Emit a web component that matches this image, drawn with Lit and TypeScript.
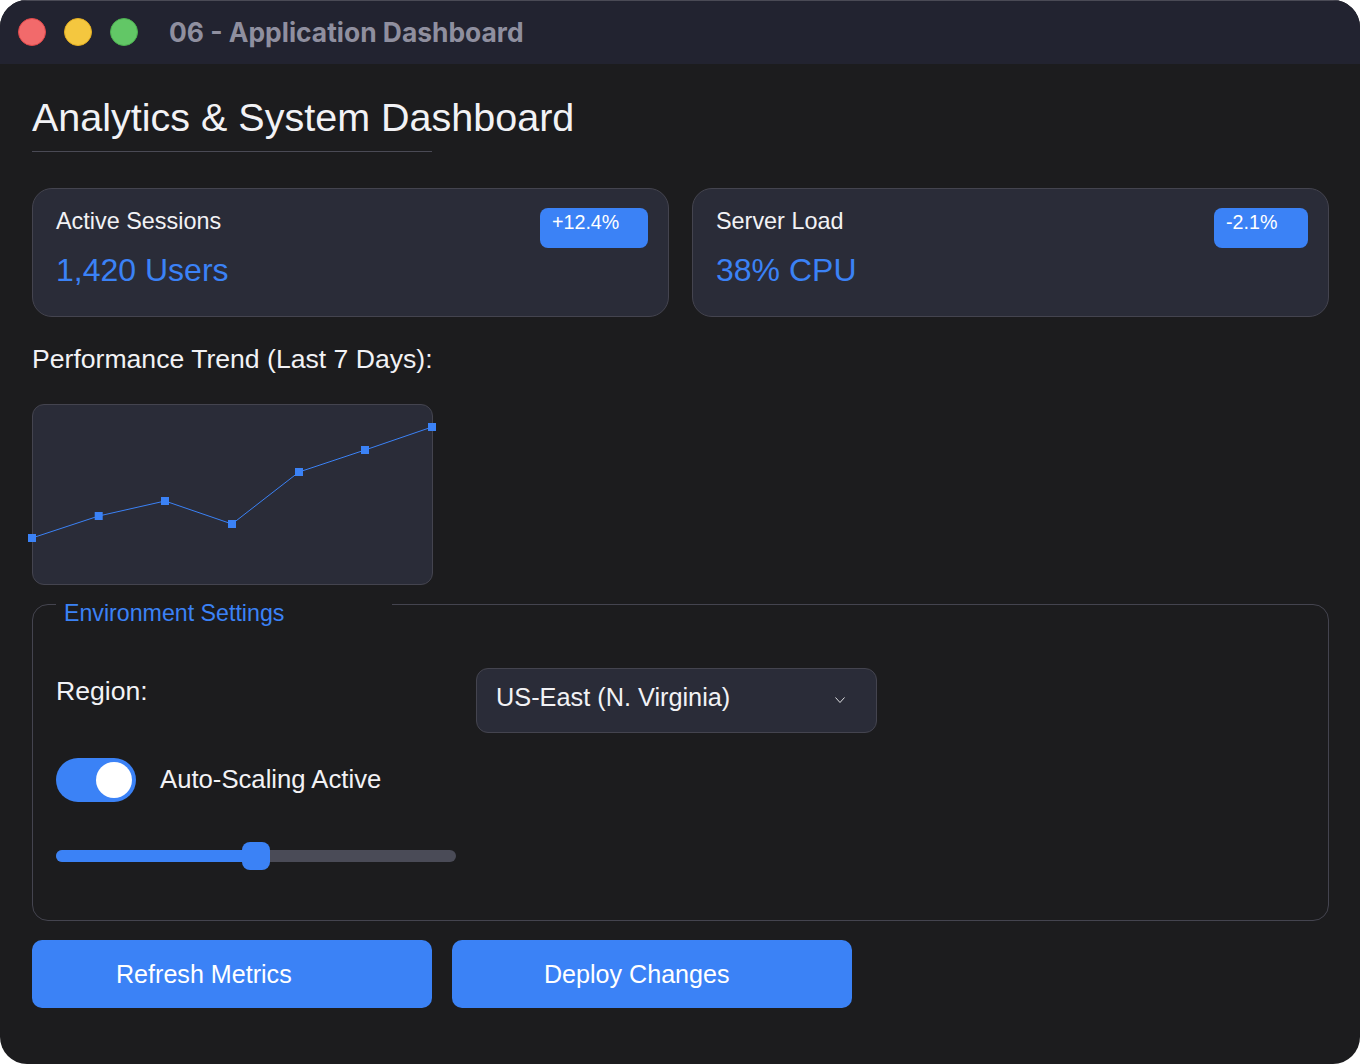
import { LitElement, html, css, svg } from "lit";
import { customElement } from "lit/decorators.js";

const PTS: [number, number][] = [[0,134],[66.7,112],[133,97],[200,120],[267,68],[333,46],[400,23]];

@customElement("app-root")
export class AppRoot extends LitElement {
  static styles = css`
    :host { display:block; width:1360px; height:1064px; background:#fff; font-family:"Liberation Sans",Arial,sans-serif; color:#f2f2f5; }
    .window { height:1064px; box-sizing:border-box; border-radius:27px; overflow:hidden; background:#1c1c1e; display:flex; flex-direction:column; }
    .bar { height:64px; flex:none; box-sizing:border-box; background:#222330; border-top:1px solid #4a4a55; display:flex; align-items:center; padding:0 0 1px 18px; }
    .dot { width:28px; height:28px; border-radius:50%; margin-right:18px; box-sizing:border-box; }
    .red { background:#f26a6b; border:1px solid #e0484a; }
    .yellow { background:#f4c73f; border:1px solid #e3ae22; }
    .green { background:#62c766; border:1px solid #4caf50; }
    .title { margin-left:13px; font:700 26.4px Inter,"Noto Sans",sans-serif; color:#8f8f9f; }
    .body { padding:32px 31px 0 32px; }
    h1 { margin:0; width:400px; height:56px; box-sizing:border-box; border-bottom:1px solid #4a4a55; white-space:nowrap; font-weight:400; font-size:39.5px; line-height:42px; }
    .cards { display:grid; grid-template-columns:1fr 1fr; gap:23px; margin-top:36px; }
    .card { height:129px; box-sizing:border-box; background:#2a2c38; border:1px solid #44444f; border-radius:20px; padding:19px 20px 0 23px; display:flex; justify-content:space-between; align-items:flex-start; }
    .card-label { font-size:23.4px; line-height:27px; }
    .card-value { font-size:32px; line-height:37px; color:#3b82f6; margin-top:17px; }
    .badge { margin-top:0; height:40px; box-sizing:border-box; background:#3b82f6; border-radius:8px; color:#fff; font-size:19.7px; line-height:28px; padding:0 29px 0 12px; }
    .badge.up { width:108px; }
    .badge.down { width:94px; }
    .trend { font-size:26.6px; line-height:28px; margin-top:28px; }
    .chart { width:401px; height:181px; box-sizing:border-box; background:#2a2c38; border:1px solid #44444f; border-radius:12px; margin-top:31px; }
    .chart svg { display:block; overflow:visible; margin:-1px; }
    fieldset { all:unset; display:block; position:relative; height:317px; box-sizing:border-box; border:1px solid #44444f; border-radius:16px; margin-top:19px; padding:63px 23px 0; }
    .legend { position:absolute; left:23px; top:-2px; width:336px; box-sizing:border-box; padding:0 8px; height:20px; background:#1c1c1e; color:#3b82f6; font-size:23.2px; line-height:20px; overflow:visible; white-space:nowrap; }
    .row { display:flex; align-items:flex-start; }
    .region { width:420px; font-size:26.6px; line-height:29px; margin-top:9px; }
    .select { width:401px; height:65px; box-sizing:border-box; background:#2a2c38; border:1px solid #44444f; border-radius:12px; display:flex; align-items:center; justify-content:space-between; padding:0 31px 7px 19px; font-size:25.3px; }
    .select svg { display:block; margin-top:6px; }
    .toggle-row { display:flex; align-items:center; gap:24px; margin-top:25px; }
    .toggle { width:80px; height:44px; border-radius:22px; background:#3b82f6; display:flex; align-items:center; justify-content:flex-end; padding-right:4px; box-sizing:border-box; }
    .knob { width:36px; height:36px; border-radius:50%; background:#fff; }
    .toggle-label { font-size:25.7px; margin-top:-2px; }
    .slider { width:400px; height:28px; position:relative; margin-top:40px; }
    .track { position:absolute; left:0; right:0; top:8px; height:12px; border-radius:6px; background:#4a4b57; overflow:hidden; }
    .fill { height:100%; width:50%; background:#3b82f6; }
    .thumb { position:absolute; left:186px; top:0; width:28px; height:28px; border-radius:8px; background:#3b82f6; }
    .actions { display:flex; gap:20px; margin-top:19px; }
    button { all:unset; width:400px; height:68px; box-sizing:border-box; background:#3b82f6; color:#fff; border-radius:10px; font:25.1px "Liberation Sans",Arial,sans-serif; line-height:66px; }
    .refresh { padding-left:84px; }
    .deploy { padding-left:92px; }
  `;
  render() {
    const line = PTS.map(p => p.join(",")).join(" ");
    return html`<div class="window">
      <div class="bar">
        <span class="dot red"></span><span class="dot yellow"></span><span class="dot green"></span>
        <span class="title">06 - Application Dashboard</span>
      </div>
      <div class="body">
        <h1>Analytics &amp; System Dashboard</h1>
        <div class="cards">
          <div class="card"><div><div class="card-label">Active Sessions</div><div class="card-value">1,420 Users</div></div><div class="badge up">+12.4%</div></div>
          <div class="card"><div><div class="card-label">Server Load</div><div class="card-value">38% CPU</div></div><div class="badge down">-2.1%</div></div>
        </div>
        <div class="trend">Performance Trend (Last 7 Days):</div>
        <div class="chart"><svg width="400" height="180" viewBox="0 0 400 180">
          <polyline points=${line} fill="none" stroke="#3b82f6" stroke-width="1"></polyline>
          ${PTS.map(([x,y]) => svg`<rect x=${x-4} y=${y-4} width="8" height="8" fill="#3b82f6"></rect>`)}
        </svg></div>
        <div class="settings-wrap"><fieldset>
          <div class="legend">Environment Settings</div>
          <div class="row"><div class="region">Region:</div>
            <div class="select"><span>US-East (N. Virginia)</span>
              <svg width="10" height="6" viewBox="0 0 10 6"><polyline points="0.5,0.5 5,5.5 9.5,0.5" fill="none" stroke="#f4f4f6" stroke-width="0.9"></polyline></svg>
            </div></div>
          <div class="toggle-row"><div class="toggle"><div class="knob"></div></div><div class="toggle-label">Auto-Scaling Active</div></div>
          <div class="slider"><div class="track"><div class="fill"></div></div><div class="thumb"></div></div>
        </fieldset></div>
        <div class="actions"><button class="refresh">Refresh Metrics</button><button class="deploy">Deploy Changes</button></div>
      </div>
    </div>`;
  }
}
